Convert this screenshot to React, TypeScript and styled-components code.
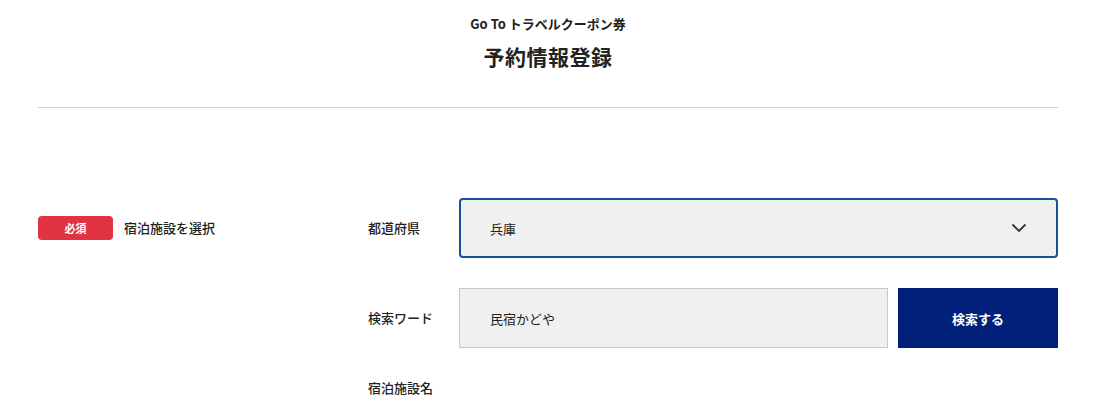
import React from 'react';
import styled, { createGlobalStyle } from 'styled-components';

const GlobalStyle = createGlobalStyle`
  html, body {
    margin: 0;
    padding: 0;
    background: #fff;
  }
  body {
    font-family: "Noto Sans CJK JP", "Noto Sans", sans-serif;
    color: #222;
  }
`;

const Page = styled.div`
  width: 1020px;
  margin: 0 36px 0 38px;
`;

const Header = styled.header`
  display: flex;
  flex-direction: column;
  align-items: center;
  padding-top: 14px;
  padding-bottom: 35px;
  border-bottom: 1px solid #cfcfcf;
`;

const SubTitle = styled.p`
  margin: 0;
  font-size: 13px;
  font-weight: 700;
  line-height: 20px;
`;

const Title = styled.h1`
  margin: 6px 0 0;
  font-size: 21px;
  font-weight: 700;
  line-height: 32px;
  letter-spacing: 0.5px;
`;

const Section = styled.section`
  display: flex;
  padding-top: 90px;
`;

const Side = styled.div`
  width: 330px;
  display: flex;
  align-items: flex-start;
  gap: 11px;
  padding-top: 18px;
`;

const Badge = styled.span`
  width: 75px;
  height: 24px;
  border-radius: 4px;
  background: #e23343;
  color: #fff;
  font-size: 11px;
  font-weight: 700;
  display: flex;
  align-items: center;
  justify-content: center;
`;

const SideLabel = styled.span`
  font-size: 13px;
  font-weight: 500;
  line-height: 24px;
`;

const Fields = styled.div`
  flex: 1;
  display: flex;
  flex-direction: column;
  gap: 30px;
`;

const Row = styled.div<{ $short?: boolean }>`
  display: flex;
  align-items: center;
  gap: 10px;
  min-height: ${p => (p.$short ? '20px' : '60px')};
`;

const Label = styled.span`
  width: 81px;
  font-size: 13px;
  font-weight: 500;
  line-height: 20px;
  flex-shrink: 0;
`;

const Select = styled.div`
  flex: 1;
  height: 60px;
  box-sizing: border-box;
  border: 2px solid #1a4f9e;
  border-radius: 4px;
  background: #f0f0f0;
  display: flex;
  align-items: center;
  justify-content: space-between;
  padding: 0 29px 0 29px;
  font-size: 13px;
`;

const Input = styled.div`
  flex: 1;
  height: 60px;
  box-sizing: border-box;
  border: 1px solid #c8c8c8;
  background: #f0f0f0;
  display: flex;
  align-items: center;
  padding-left: 30px;
  font-size: 13px;
`;

const Button = styled.button`
  width: 160px;
  height: 60px;
  border: none;
  background: #00207a;
  color: #fff;
  font-family: inherit;
  font-size: 13px;
  font-weight: 700;
  cursor: pointer;
`;

const Chevron = () => (
  <svg width="16" height="10" viewBox="0 0 16 10" fill="none">
    <path d="M1.5 1.5 L8 8 L14.5 1.5" stroke="#333" strokeWidth="1.8" />
  </svg>
);

export default function App() {
  return (
    <Page>
      <GlobalStyle />
      <Header>
        <SubTitle>Go To トラベルクーポン券</SubTitle>
        <Title>予約情報登録</Title>
      </Header>
      <Section>
        <Side>
          <Badge>必須</Badge>
          <SideLabel>宿泊施設を選択</SideLabel>
        </Side>
        <Fields>
          <Row>
            <Label>都道府県</Label>
            <Select>
              <span>兵庫</span>
              <Chevron />
            </Select>
          </Row>
          <Row>
            <Label>検索ワード</Label>
            <Input>民宿かどや</Input>
            <Button>検索する</Button>
          </Row>
          <Row $short>
            <Label>宿泊施設名</Label>
          </Row>
        </Fields>
      </Section>
    </Page>
  );
}
